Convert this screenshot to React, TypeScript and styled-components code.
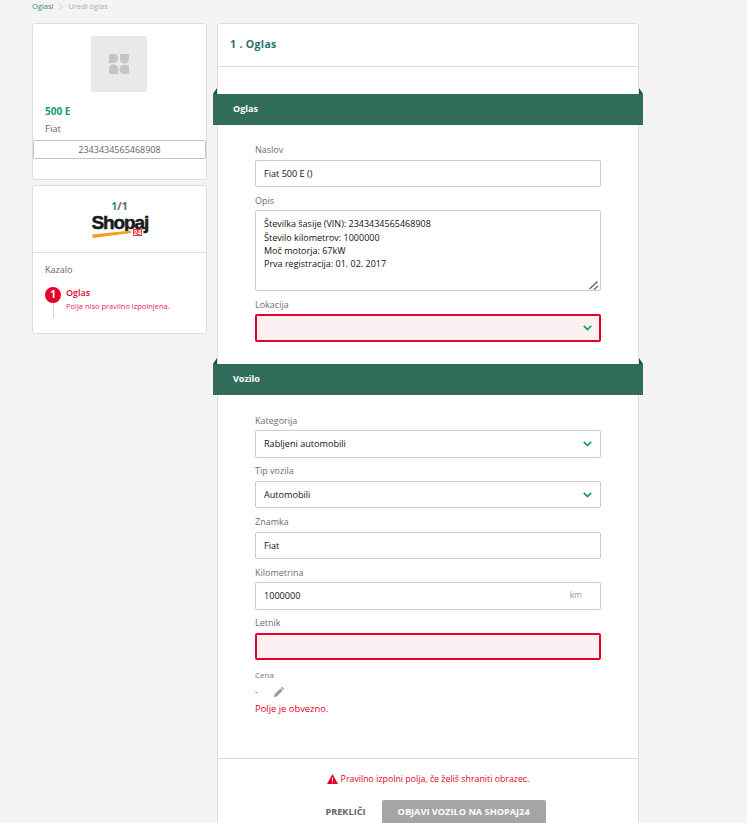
import React from "react";
import styled, { createGlobalStyle } from "styled-components";

const Global = createGlobalStyle`
  html, body { margin: 0; padding: 0; background: #f4f4f4; height: 823px; overflow: hidden; }
  body { font-family: "Open Sans", "Liberation Sans", sans-serif; color: #555; }
  * { box-sizing: border-box; }
`;

const Page = styled.div`
  width: 747px;
  height: 823px;
  overflow: hidden;
  padding: 0 0 0 32px;
`;
const Crumbs = styled.nav`
  height: 23px;
  display: flex;
  align-items: flex-start;
  gap: 5px;
  font-size: 7.5px;
  line-height: 13px;
  color: #aaa;
`;
const CrumbLink = styled.span`
  color: #2f8f6f;
`;
const Columns = styled.div`
  display: flex;
  align-items: flex-start;
  gap: 10px;
`;
const Side = styled.aside`
  width: 175px;
  display: flex;
  flex-direction: column;
  gap: 5px;
`;
const Card = styled.section`
  background: #fff;
  border: 1px solid #dedede;
  border-radius: 3px;
`;
const VehicleCard = styled(Card)`
  height: 157px;
  padding: 12px 0 0;
  display: flex;
  flex-direction: column;
`;
const Thumb = styled.div`
  width: 56px;
  height: 56px;
  margin: 0 0 0 58px;
  background: #e9e9e9;
  border-radius: 2px;
  display: flex;
  align-items: center;
  justify-content: center;
`;
const Price = styled.div`
  margin: 12px 0 0 12px;
  font-size: 10px;
  line-height: 14px;
  font-weight: 700;
  color: #13a05f;
`;
const Make = styled.div`
  margin: 4px 0 0 12px;
  font-size: 9.5px;
  line-height: 14px;
  color: #666;
`;
const Vin = styled.div`
  margin: 4px 0 0;
  height: 19px;
  border: 1px solid #c6c6c6;
  border-radius: 2px;
  text-align: center;
  font-size: 9px;
  line-height: 17px;
  color: #666;
`;
const PublishCard = styled(Card)`
  height: 149px;
  display: flex;
  flex-direction: column;
`;
const PublishHead = styled.div`
  height: 67px;
  border-bottom: 1px solid #dedede;
  display: flex;
  flex-direction: column;
  align-items: center;
  padding-top: 13px;
`;
const Count = styled.div`
  font-size: 10.5px;
  line-height: 14px;
  font-weight: 700;
  color: #666;
`;
const CountNow = styled.span`
  color: #13a05f;
`;
const Logo = styled.div`
  position: relative;
  width: 56px;
  height: 26px;
  margin-top: -1px;
`;
const LogoWord = styled.span`
  display: block;
  font-family: "Liberation Sans", sans-serif;
  font-size: 19px;
  line-height: 22px;
  font-weight: 700;
  letter-spacing: -1.1px;
  color: #1a1a1a;
  -webkit-text-stroke: 0.5px #1a1a1a;
`;
const LogoBadge = styled.span`
  position: absolute;
  left: 41px;
  top: 17px;
  height: 7px;
  padding: 0 1px;
  background: #e5304f;
  color: #fff;
  font-family: "Liberation Sans", sans-serif;
  font-size: 7px;
  line-height: 7px;
  font-weight: 700;
`;
const LogoSwoosh = styled.svg`
  position: absolute;
  left: 0;
  top: 17px;
`;
const Toc = styled.div`
  padding: 10px 12px 0;
`;
const TocTitle = styled.div`
  font-size: 9px;
  line-height: 14px;
  color: #666;
`;
const TocItem = styled.div`
  display: flex;
  gap: 5px;
  margin-top: 10px;
`;
const TocMarker = styled.div`
  width: 16px;
  display: flex;
  flex-direction: column;
  align-items: center;
`;
const TocNumber = styled.div`
  width: 16px;
  height: 16px;
  border-radius: 50%;
  background: #e4002b;
  color: #fff;
  font-size: 10px;
  line-height: 15px;
  font-weight: 700;
  text-align: center;
`;
const TocLine = styled.div`
  width: 1px;
  height: 15px;
  background: #d4d4d4;
`;
const TocText = styled.div`
  margin-top: -1px;
`;
const TocName = styled.div`
  font-size: 9px;
  line-height: 14px;
  font-weight: 600;
  color: #e4002b;
`;
const TocError = styled.div`
  font-size: 7.5px;
  line-height: 13px;
  color: #e8254f;
`;
const Main = styled(Card)`
  width: 422px;
  height: 860px;
`;
const MainHead = styled.header`
  height: 43px;
  border-bottom: 1px solid #dedede;
  padding: 0 0 2px 12px;
  display: flex;
  align-items: center;
  font-size: 10.5px;
  letter-spacing: 0.35px;
  font-weight: 700;
  color: #2a6f6b;
`;
const Ribbon = styled.div<{ $top: number }>`
  position: relative;
  height: 31px;
  margin: ${(p) => p.$top}px -5px 0;
  padding-left: 20px;
  background: #326d5c;
  color: #fff;
  font-size: 9px;
  font-weight: 700;
  line-height: 29px;
  &::before, &::after {
    content: "";
    position: absolute;
    top: -6px;
    width: 4px;
    height: 6px;
    background: #1d4b3e;
  }
  &::before { left: 0; clip-path: polygon(100% 0, 100% 100%, 0 100%); }
  &::after { right: 0; clip-path: polygon(0 0, 100% 100%, 0 100%); }
`;
const Group = styled.div<{ $top: number }>`
  padding: ${(p) => p.$top}px 37px 0;
`;
const Field = styled.div`
  display: flex;
  flex-direction: column;
  padding-bottom: 3.7px;
`;
const Label = styled.label`
  height: 19.5px;
  font-size: 9px;
  line-height: 19px;
  color: #6e6e6e;
`;
const InputWrap = styled.div`
  position: relative;
  display: flex;
`;
const Input = styled.input<{ $error?: boolean }>`
  width: 100%;
  height: 27.5px;
  padding: 0 8px;
  border: ${(p) => (p.$error ? "2px solid #e4002b" : "1px solid #cbcbcb")};
  border-radius: 2px;
  background: ${(p) => (p.$error ? "#fdf0f2" : "#fff")};
  font: 500 9.1px "Open Sans", sans-serif;
  color: #111;
  outline: none;
`;
const Select = styled.select<{ $error?: boolean }>`
  appearance: none;
  width: 100%;
  height: 27.5px;
  padding: 0 8px;
  border: ${(p) => (p.$error ? "2px solid #e4002b" : "1px solid #cbcbcb")};
  border-radius: 2px;
  background: ${(p) => (p.$error ? "#fdf0f2" : "#fff")};
  font: 500 9.1px "Open Sans", sans-serif;
  color: #111;
  outline: none;
`;
const Chevron = styled.svg`
  position: absolute;
  right: 9px;
  top: 11px;
  pointer-events: none;
`;
const Unit = styled.span`
  position: absolute;
  right: 19px;
  top: 7px;
  font-size: 8.5px;
  line-height: 12px;
  color: #999;
`;
const TextArea = styled.textarea`
  display: block;
  width: 100%;
  height: 81px;
  padding: 6px 8px;
  border: 1px solid #cbcbcb;
  border-radius: 2px;
  font: 500 9px/13.4px "Open Sans", sans-serif;
  color: #111;
  outline: none;
  resize: none;
`;
const Grip = styled.svg`
  position: absolute;
  right: 2px;
  bottom: 1px;
  pointer-events: none;
`;
const PriceLabel = styled.div`
  margin-top: 4.5px;
  font-size: 8px;
  line-height: 11px;
  color: #777;
`;
const PriceRow = styled.div`
  display: flex;
  align-items: center;
  gap: 16px;
  margin-top: 6px;
  height: 12px;
  font-size: 9px;
  color: #555;
`;
const FieldError = styled.div`
  margin-top: 4px;
  font-size: 9.4px;
  line-height: 14px;
  color: #e4002b;
`;
const Footer = styled.footer`
  margin-top: 42px;
  border-top: 1px solid #dedede;
  display: flex;
  flex-direction: column;
  align-items: center;
`;
const Warning = styled.div`
  margin-top: 13px;
  display: flex;
  align-items: center;
  gap: 3px;
  font-size: 8.8px;
  line-height: 14px;
  color: #e4002b;
`;
const Actions = styled.div`
  margin: 14px 0 0 15px;
  display: flex;
  align-items: flex-start;
  gap: 16px;
`;
const Cancel = styled.button`
  border: 0;
  padding: 0;
  height: 24px;
  background: none;
  font: 700 9.2px "Open Sans", sans-serif;
  color: #666;
`;
const Publish = styled.button`
  width: 164px;
  height: 30px;
  border: 0;
  border-radius: 2px;
  background: #a5a5a5;
  padding: 0 0 6px;
  font: 700 9.2px "Open Sans", sans-serif;
  color: #fff;
`;

const ChevronIcon = () => (
  <Chevron width="9" height="6" viewBox="0 0 9 6" fill="none">
    <path d="M.8 .8 4.5 4.5 8.2 .8" stroke="#13a05f" strokeWidth="1.7" />
  </Chevron>
);

const SelectField = ({ label, value, error }: { label: string; value: string; error?: boolean }) => (
  <Field>
    <Label>{label}</Label>
    <InputWrap>
      <Select $error={error} value={value} onChange={() => undefined}>
        <option value={value}>{value}</option>
      </Select>
      <ChevronIcon />
    </InputWrap>
  </Field>
);

const TextField = ({ label, value, error, unit }: { label: string; value: string; error?: boolean; unit?: string }) => (
  <Field>
    <Label>{label}</Label>
    <InputWrap>
      <Input $error={error} value={value} readOnly />
      {unit && <Unit>{unit}</Unit>}
    </InputWrap>
  </Field>
);

const description = `Številka šasije (VIN): 2343434565468908
Število kilometrov: 1000000
Moč motorja: 67kW
Prva registracija: 01. 02. 2017`;

export default function App() {
  return (
    <Page>
      <Global />
      <Crumbs>
        <CrumbLink>Oglasi</CrumbLink>
        <svg width="5" height="13" viewBox="0 0 5 13" fill="none">
          <path d="M1 3.5 4 6.5 1 9.5" stroke="#ccc" strokeWidth="1" />
        </svg>
        <span>Uredi oglas</span>
      </Crumbs>
      <Columns>
        <Side>
          <VehicleCard>
            <Thumb>
              <svg width="20" height="20" viewBox="0 0 20 20" fill="#c4c4c4">
                <path d="M0 0h5a4 4 0 0 1 4 4.5A4.5 4.5 0 0 1 4.5 9H0z" />
                <path d="M11 0h9v5a4.5 4.5 0 0 1-9 0z" />
                <path d="M0 20v-5a4.5 4.5 0 0 1 9 0v5z" />
                <path d="M20 20h-5a4.5 4.5 0 0 1 0-9h5z" />
              </svg>
            </Thumb>
            <Price>500 E</Price>
            <Make>Fiat</Make>
            <Vin>2343434565468908</Vin>
          </VehicleCard>
          <PublishCard>
            <PublishHead>
              <Count>
                <CountNow>1</CountNow>/1
              </Count>
              <Logo>
                <LogoWord>Shopaj</LogoWord>
                <LogoSwoosh width="40" height="9" viewBox="0 0 40 9">
                  <path d="M0 5.5 39 1.5 39 4 1 9z" fill="#f3a11f" />
                </LogoSwoosh>
                <LogoBadge>24</LogoBadge>
              </Logo>
            </PublishHead>
            <Toc>
              <TocTitle>Kazalo</TocTitle>
              <TocItem>
                <TocMarker>
                  <TocNumber>1</TocNumber>
                  <TocLine />
                </TocMarker>
                <TocText>
                  <TocName>Oglas</TocName>
                  <TocError>Polja niso pravilno izpolnjena.</TocError>
                </TocText>
              </TocItem>
            </Toc>
          </PublishCard>
        </Side>
        <Main>
          <MainHead>1 . Oglas</MainHead>
          <Ribbon $top={27}>Oglas</Ribbon>
          <Group $top={15}>
            <TextField label="Naslov" value="Fiat 500 E ()" />
            <Field>
              <Label>Opis</Label>
              <InputWrap>
                <TextArea defaultValue={description} readOnly />
                <Grip width="10" height="10" viewBox="0 0 10 10" fill="none">
                  <path d="M.5 9 8.5 1.5M5 9.5 9 6" stroke="#666" strokeWidth="1.4" />
                </Grip>
              </InputWrap>
            </Field>
            <SelectField label="Lokacija" value="" error />
          </Group>
          <Ribbon $top={18.4}>Vozilo</Ribbon>
          <Group $top={15.7}>
            <SelectField label="Kategorija" value="Rabljeni automobili" />
            <SelectField label="Tip vozila" value="Automobili" />
            <TextField label="Znamka" value="Fiat" />
            <TextField label="Kilometrina" value="1000000" unit="km" />
            <TextField label="Letnik" value="" error />
            <PriceLabel>Cena</PriceLabel>
            <PriceRow>
              <span>-</span>
              <svg width="10" height="10" viewBox="0 0 10 10" fill="#999">
                <path d="M0 10 .6 7.2 6.4 1.4 8.6 3.6 2.8 9.4zM7 .8 7.6.2a.7.7 0 0 1 1 0l1.2 1.2a.7.7 0 0 1 0 1L9.2 3z" />
              </svg>
            </PriceRow>
            <FieldError>Polje je obvezno.</FieldError>
          </Group>
          <Footer>
            <Warning>
              <svg width="11" height="10" viewBox="0 0 11 10">
                <path d="M5.5 0 11 10H0z" fill="#e4002b" />
                <path d="M5 3.5h1V7H5zM5 7.8h1v1H5z" fill="#fff" />
              </svg>
              Pravilno izpolni polja, če želiš shraniti obrazec.
            </Warning>
            <Actions>
              <Cancel>PREKLIČI</Cancel>
              <Publish>OBJAVI VOZILO NA SHOPAJ24</Publish>
            </Actions>
          </Footer>
        </Main>
      </Columns>
    </Page>
  );
}
